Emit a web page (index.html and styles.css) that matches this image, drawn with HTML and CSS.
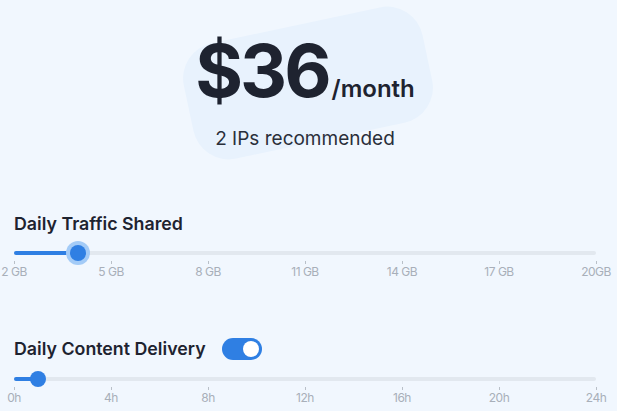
FILE: index.html
```html
<!DOCTYPE html>
<html lang="en">
<head>
    <meta charset="UTF-8">
    <meta name="viewport" content="width=device-width, initial-scale=1.0">
    <title>Pricing</title>
    <link rel="stylesheet" href="styles.css">
</head>
<body>

    <div class="hero">
        <div class="blob"></div>
        <div class="price"><span class="amount">$36</span><span class="per">/month</span></div>
        <div class="ips">2 IPs recommended</div>
    </div>

    <div class="section traffic">
        <div class="title-row">
            <div class="title">Daily Traffic Shared</div>
        </div>
        <div class="slider">
            <div class="track"></div>
            <div class="fill" style="width: 64px;"></div>
            <div class="thumb halo" style="left: 64px;"></div>
        </div>
        <div class="ticks">
            <div class="tick"><i></i><span>2 GB</span></div>
            <div class="tick"><i></i><span>5 GB</span></div>
            <div class="tick"><i></i><span>8 GB</span></div>
            <div class="tick"><i></i><span>11 GB</span></div>
            <div class="tick"><i></i><span>14 GB</span></div>
            <div class="tick"><i></i><span>17 GB</span></div>
            <div class="tick"><i></i><span>20GB</span></div>
        </div>
    </div>

    <div class="section delivery">
        <div class="title-row">
            <div class="title">Daily Content Delivery</div>
            <div class="toggle on"><div class="knob"></div></div>
        </div>
        <div class="slider">
            <div class="track"></div>
            <div class="fill" style="width: 24px;"></div>
            <div class="thumb" style="left: 24px;"></div>
        </div>
        <div class="ticks">
            <div class="tick"><i></i><span>0h</span></div>
            <div class="tick"><i></i><span>4h</span></div>
            <div class="tick"><i></i><span>8h</span></div>
            <div class="tick"><i></i><span>12h</span></div>
            <div class="tick"><i></i><span>16h</span></div>
            <div class="tick"><i></i><span>20h</span></div>
            <div class="tick"><i></i><span>24h</span></div>
        </div>
    </div>

</body>
</html>
```

FILE: styles.css
```css
body {
    margin: 0;
    background: #f1f7fe;
    font-family: Inter, "Noto Sans", sans-serif;
    color: #1e2330;
    overflow: hidden;
}

.hero {
    position: relative;
    padding-top: 31px;
    display: flex;
    flex-direction: column;
    align-items: center;
    padding-right: 7px;
}

.blob {
    position: absolute;
    left: 186px;
    top: 24px;
    width: 244px;
    height: 118px;
    border-radius: 36px;
    background: #e8f2fd;
    transform: rotate(-12deg);
    z-index: 0;
}

.price {
    position: relative;
    display: flex;
    align-items: baseline;
}

.amount {
    font-size: 73px;
    line-height: 80px;
    font-weight: 700;
    letter-spacing: -3px;
}

.per {
    font-size: 24px;
    line-height: 1;
    font-weight: 600;
    margin-left: 3px;
}

.ips {
    position: relative;
    margin-top: 16px;
    font-size: 19px;
    line-height: 24px;
    color: #2a2f3a;
}

.section {
    padding: 0 21px 0 14px;
}

.traffic {
    margin-top: 62px;
}

.delivery {
    margin-top: 59px;
}

.title-row {
    display: flex;
    align-items: center;
    height: 22px;
}

.title {
    font-size: 17.8px;
    font-weight: 600;
    line-height: 22px;
}

.toggle {
    width: 40px;
    height: 22px;
    border-radius: 11px;
    background: #2f7fe3;
    margin-left: 16px;
    display: flex;
    align-items: center;
    justify-content: flex-end;
    padding: 0 3px;
    box-sizing: border-box;
}

.knob {
    width: 16px;
    height: 16px;
    border-radius: 50%;
    background: #fff;
}

.traffic .slider {
    margin-top: 10px;
}

.delivery .slider {
    margin-top: 11px;
}

.slider {
    position: relative;
    height: 16px;
}

.track {
    position: absolute;
    left: 0;
    right: 0;
    top: 6px;
    height: 4px;
    border-radius: 2px;
    background: #e2e8ef;
}

.fill {
    position: absolute;
    left: 0;
    top: 6px;
    height: 4px;
    border-radius: 2px;
    background: #2f7fe3;
}

.thumb {
    position: absolute;
    top: 0;
    width: 16px;
    height: 16px;
    margin-left: -8px;
    border-radius: 50%;
    background: #2f7fe3;
}

.thumb.halo {
    box-shadow: 0 0 0 4px #a3cbf7;
}

.ticks {
    display: flex;
    justify-content: space-between;
}

.tick {
    width: 0;
    display: flex;
    flex-direction: column;
    align-items: center;
}

.tick i {
    display: block;
    width: 1px;
    height: 3px;
    background: #b9c0c8;
}

.tick span {
    margin-top: 1px;
    font-size: 12px;
    line-height: 14px;
    color: #a8afb9;
    white-space: nowrap;
    letter-spacing: -0.5px;
}
```
